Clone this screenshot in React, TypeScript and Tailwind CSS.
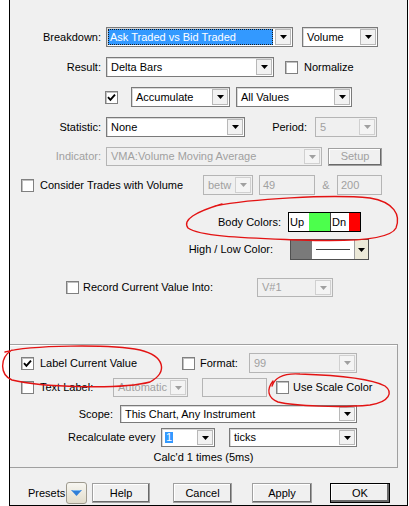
import clsx from "clsx";

type ComboProps = {
  className: string;
  value?: string;
  disabled?: boolean;
  selected?: boolean;
  partial?: boolean;
};

function Arrow({ disabled, color }: { disabled?: boolean; color?: string }) {
  return (
    <svg width="7" height="4" viewBox="0 0 7 4">
      <path d="M0 0 H7 L3.5 4 Z" fill={color ?? (disabled ? "#a0a0a0" : "#000")} />
    </svg>
  );
}

function Combo({ className, value = "", disabled, selected, partial }: ComboProps) {
  return (
    <div
      className={clsx(
        "flex items-stretch border shrink-0",
        disabled
          ? "border-[#b5b5b5] bg-[#f0f0f0] text-[#a0a0a0]"
          : "border-[#7a7a7a] bg-white text-black shadow-[inset_1px_1px_0_#d8d8d8]",
        className
      )}
    >
      <div className="flex-1 flex items-center min-w-0 p-[1px]">
        {selected ? (
          <div className="flex-1 h-full flex items-center bg-[#3399ff] text-white pl-[2px] outline outline-1 outline-dotted outline-[#1a1a1a] -outline-offset-1">
            {value}
          </div>
        ) : partial ? (
          <span className="ml-[2px] bg-[#3399ff] text-white px-[1px]">{value}</span>
        ) : (
          <span className="pl-[3px] whitespace-nowrap">{value}</span>
        )}
      </div>
      <div
        className={clsx(
          "w-[16px] m-[1px] flex items-center justify-center border",
          disabled ? "border-[#d0d0d0] bg-[#f4f4f4]" : "border-[#b8b8b8] bg-[#f2f2f2]"
        )}
      >
        <Arrow disabled={disabled} />
      </div>
    </div>
  );
}

function TextBox({ className, value = "" }: { className: string; value?: string }) {
  return (
    <div className={clsx("flex items-center border border-[#b5b5b5] bg-[#f0f0f0] text-[#a0a0a0] pl-[3px] shrink-0", className)}>
      {value}
    </div>
  );
}

function Check({ checked }: { checked?: boolean }) {
  return (
    <div className="w-[13px] h-[13px] shrink-0 border border-[#808080] bg-white shadow-[inset_1px_1px_0_#c0c0c0] flex items-center justify-center">
      {checked && (
        <svg width="9" height="9" viewBox="0 0 9 9">
          <path d="M1 4.2 L3.4 6.8 L8 1.6" fill="none" stroke="#000" strokeWidth="1.9" />
        </svg>
      )}
    </div>
  );
}

function Button({ label, className, primary, disabled }: { label: string; className: string; primary?: boolean; disabled?: boolean }) {
  return (
    <div
      className={clsx(
        "flex items-center justify-center bg-[#f0f0f0] border shrink-0",
        primary
          ? "border-black shadow-[inset_-2px_-2px_0_#696969,inset_1px_1px_0_#fff]"
          : "border-[#a0a0a0] shadow-[inset_-1px_-1px_0_#696969,inset_1px_1px_0_#fff]",
        disabled ? "text-[#a0a0a0]" : "text-black",
        className
      )}
    >
      {label}
    </div>
  );
}

export default function App() {
  return (
    <div className="relative w-[409px] h-[506px] bg-white font-['Liberation_Sans',Arial,sans-serif] text-[11px] leading-none text-black overflow-hidden">
      <div className="ml-[9px] w-[399px] h-[506px] bg-[#f0f0f0] border-l border-r border-b border-black flex flex-col">
        {/* Breakdown */}
        <div className="mt-[27px] h-[20px] flex items-center">
          <div className="w-[96px] text-right pr-[5px]">Breakdown:</div>
          <Combo className="w-[187px] h-[20px]" value="Ask Traded vs Bid Traded" selected />
          <Combo className="ml-[9px] w-[76px] h-[20px]" value="Volume" />
        </div>

        {/* Result */}
        <div className="mt-[10px] h-[20px] flex items-center">
          <div className="w-[96px] text-right pr-[5px]">Result:</div>
          <Combo className="w-[168px] h-[20px]" value="Delta Bars" />
          <div className="ml-[11px]">
            <Check />
          </div>
          <span className="ml-[6px]">Normalize</span>
        </div>

        {/* Accumulate */}
        <div className="mt-[10px] h-[20px] flex items-center">
          <div className="ml-[95px]">
            <Check checked />
          </div>
          <Combo className="ml-[13px] w-[99px] h-[20px]" value="Accumulate" />
          <Combo className="ml-[6px] w-[116px] h-[20px]" value="All Values" />
        </div>

        {/* Statistic / Period */}
        <div className="mt-[10px] h-[20px] flex items-center">
          <div className="w-[96px] text-right pr-[5px]">Statistic:</div>
          <Combo className="w-[139px] h-[20px]" value="None" />
          <div className="w-[70px] text-right pr-[8px]">Period:</div>
          <Combo className="w-[62px] h-[20px]" value="5" disabled />
        </div>

        {/* Indicator */}
        <div className="mt-[10px] h-[19px] flex items-center">
          <div className="w-[96px] text-right pr-[5px] text-[#a0a0a0]">Indicator:</div>
          <Combo className="w-[216px] h-[19px]" value="VMA:Volume Moving Average" disabled />
          <Button label="Setup" className="ml-[6px] w-[54px] h-[18px]" disabled />
        </div>

        {/* Volume filter */}
        <div className="mt-[9px] h-[20px] flex items-center">
          <div className="ml-[11px]">
            <Check />
          </div>
          <span className="ml-[6px] w-[163px] whitespace-nowrap">Consider Trades with Volume</span>
          <Combo className="w-[50px] h-[20px]" value="betw" disabled />
          <TextBox className="ml-[6px] w-[56px] h-[20px]" value="49" />
          <span className="w-[22px] text-center text-[#a0a0a0]">&amp;</span>
          <TextBox className="w-[45px] h-[20px]" value="200" />
        </div>

        {/* Body colours */}
        <div className="mt-[17px] h-[20px] flex items-center">
          <div className="w-[278px] text-right pr-[7px]">Body Colors:</div>
          <div className="w-[73px] h-[20px] flex border border-black">
            <div className="w-[20px] bg-white flex items-center pl-[1px]">Up</div>
            <div className="w-[21px] bg-[#4cff4c]" />
            <div className="w-[19px] bg-white flex items-center pl-[1px] border-l border-[#404040]">Dn</div>
            <div className="flex-1 bg-[#ff0000]" />
          </div>
        </div>

        {/* High / Low colour */}
        <div className="mt-[7px] h-[21px] flex items-center">
          <div className="w-[280px] text-right pr-[17px]">High / Low Color:</div>
          <div className="w-[79px] h-[21px] flex border border-[#505050]">
            <div className="w-[21px] bg-[#7a7a7a]" />
            <div className="w-[42px] bg-white flex items-center justify-center">
              <div className="w-[34px] h-px bg-[#404040]" />
            </div>
            <div className="flex-1 bg-[#ece9d8] border-l border-[#a0a0a0] flex items-center justify-center">
              <Arrow />
            </div>
          </div>
        </div>

        {/* Record value */}
        <div className="mt-[18px] h-[19px] flex items-center">
          <div className="ml-[56px]">
            <Check />
          </div>
          <span className="ml-[4px] w-[174px] whitespace-nowrap">Record Current Value Into:</span>
          <Combo className="w-[76px] h-[19px]" value="V#1" disabled />
        </div>

        {/* Label group */}
        <div className="mt-[47px] w-[388px] h-[124px] border-t border-r border-b border-[#a0a0a0] shadow-[inset_0_1px_0_#fff] flex flex-col">
          <div className="mt-[8px] h-[20px] flex items-center">
            <div className="ml-[11px]">
              <Check checked />
            </div>
            <span className="ml-[6px] w-[142px] whitespace-nowrap">Label Current Value</span>
            <Check />
            <span className="ml-[5px] w-[49px]">Format:</span>
            <Combo className="w-[108px] h-[20px]" value="99" disabled />
          </div>

          <div className="mt-[5px] h-[19px] flex items-center">
            <div className="ml-[11px]">
              <Check />
            </div>
            <span className="ml-[6px] w-[73px] whitespace-nowrap">Text Label:</span>
            <Combo className="w-[75px] h-[19px]" value="Automatic" disabled />
            <TextBox className="ml-[14px] w-[65px] h-[19px]" />
            <div className="ml-[9px]">
              <Check />
            </div>
            <span className="ml-[4px] whitespace-nowrap">Use Scale Color</span>
          </div>

          <div className="mt-[8px] h-[18px] flex items-center">
            <div className="w-[110px] text-right pr-[7px]">Scope:</div>
            <Combo className="w-[237px] h-[18px]" value="This Chart, Any Instrument" />
          </div>

          <div className="mt-[5px] h-[19px] flex items-center">
            <span className="ml-[58px] w-[93px] whitespace-nowrap">Recalculate every</span>
            <Combo className="w-[54px] h-[19px]" value="1" partial />
            <Combo className="ml-[14px] w-[128px] h-[19px]" value="ticks" />
          </div>

          <div className="mt-[5px] text-center">Calc'd 1 times (5ms)</div>
        </div>

        {/* Footer buttons */}
        <div className="mt-[14px] h-[22px] flex items-center">
          <span className="ml-[18px] w-[38px]">Presets</span>
          <div className="w-[21px] h-[22px] rounded-[3px] border border-[#9e9a8e] bg-gradient-to-b from-[#f7f6f1] to-[#e2ddcc] flex items-center justify-center">
            <svg width="11" height="6" viewBox="0 0 11 6">
              <path d="M0 0 H11 L5.5 6 Z" fill="#2f7fd8" />
              <path d="M1.5 0.5 H9.5" stroke="#7fb8ee" strokeWidth="1" />
            </svg>
          </div>
          <Button label="Help" className="ml-[5px] w-[58px] h-[20px]" />
          <Button label="Cancel" className="ml-[23px] w-[59px] h-[20px]" />
          <Button label="Apply" className="ml-[20px] w-[60px] h-[20px]" />
          <Button label="OK" className="ml-[18px] w-[60px] h-[20px]" primary />
        </div>
      </div>

      {/* hand-drawn marker loops */}
      <svg className="absolute left-0 top-0 pointer-events-none" width="409" height="506" viewBox="0 0 409 506">
        <g fill="none" stroke="#e31313" strokeWidth="1.4" strokeLinecap="round">
          <path d="M215 206 C250 199 330 194 370 198 C394 202 401 215 396 228 C390 240 350 242 300 240 C250 238 200 237 188 228 C182 220 195 212 222 204" />
          <path d="M5 352 C30 345 110 344 140 350 C165 356 168 372 150 382 C120 390 40 387 12 380 C0 375 -1 358 12 350" />
          <path d="M272 386 C275 377 285 373 300 374 C330 375 370 378 385 386 C393 392 390 402 370 405 C340 408 295 406 278 402 C268 398 266 390 273 381" />
        </g>
      </svg>
    </div>
  );
}
